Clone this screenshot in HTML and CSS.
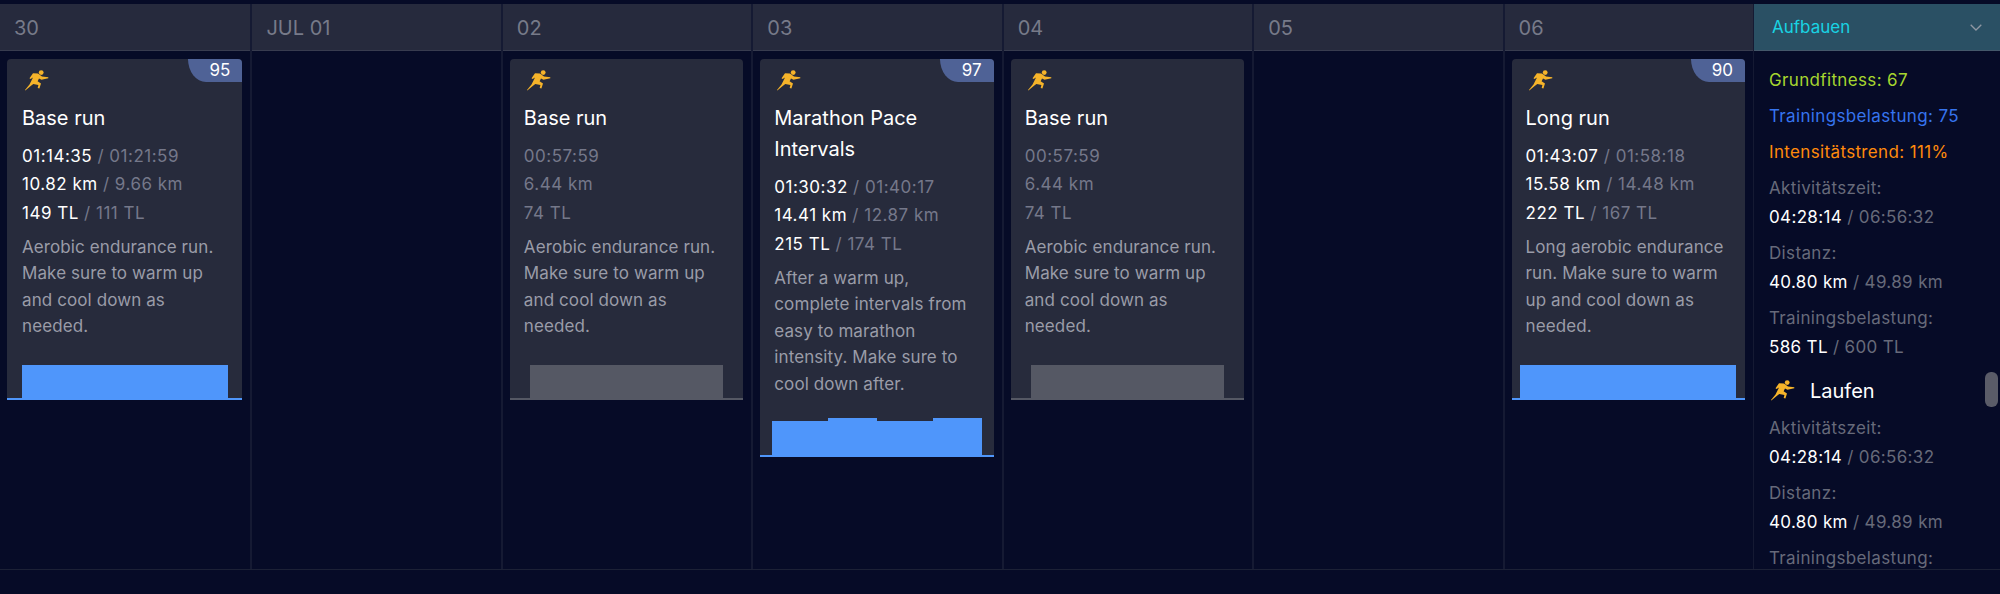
FILE: index.html
```html
<!DOCTYPE html>
<html lang="de">
<head>
<meta charset="utf-8">
<title>Kalender</title>
<link rel="stylesheet" href="styles.css">
</head>
<body>
<svg class="defs" width="0" height="0" aria-hidden="true"><defs>
<symbol id="runner" viewBox="0 0 24 21"><circle cx="16.2" cy="2.6" r="2.4"/><path d="M4.5 8.3 8 3.2 13 3.4 17 6.6 23.3 7.3 23.3 8.2 16.5 9.8 14 8.5 12.6 11.3 16 13.6 14.4 18.4 12.7 18 13.4 15 8.3 14 6 15.8 .3 20.5 0 20 4.5 14.5 8 7.5 5.5 9Z"/></symbol>
</defs></svg>
<main class="board">
  <div class="week">
    <section class="day">
      <header class="day-head">30</header>
      <div class="day-body">
        <article class="card card-done">
          <span class="badge">95</span>
          <svg class="run"><use href="#runner"/></svg>
          <h3 class="title">Base run</h3>
          <p class="stat"><b>01:14:35</b> / 01:21:59</p>
          <p class="stat"><b>10.82 km</b> / 9.66 km</p>
          <p class="stat"><b>149 TL</b> / 111 TL</p>
          <p class="desc">Aerobic endurance run. Make sure to warm up and cool down as needed.</p>
          <div class="chart"><i class="seg" style="width:206px;height:33px"></i></div>
        </article>
      </div>
    </section>
    <section class="day">
      <header class="day-head">JUL 01</header>
      <div class="day-body"></div>
    </section>
    <section class="day">
      <header class="day-head">02</header>
      <div class="day-body">
        <article class="card card-plan">
          <svg class="run"><use href="#runner"/></svg>
          <h3 class="title">Base run</h3>
          <p class="stat">00:57:59</p>
          <p class="stat">6.44 km</p>
          <p class="stat">74 TL</p>
          <p class="desc">Aerobic endurance run. Make sure to warm up and cool down as needed.</p>
          <div class="chart"><i class="seg" style="width:193px;height:33px"></i></div>
        </article>
      </div>
    </section>
    <section class="day">
      <header class="day-head">03</header>
      <div class="day-body">
        <article class="card card-done">
          <span class="badge">97</span>
          <svg class="run"><use href="#runner"/></svg>
          <h3 class="title">Marathon Pace Intervals</h3>
          <p class="stat"><b>01:30:32</b> / 01:40:17</p>
          <p class="stat"><b>14.41 km</b> / 12.87 km</p>
          <p class="stat"><b>215 TL</b> / 174 TL</p>
          <p class="desc">After a warm up, complete intervals from easy to marathon intensity. Make sure to cool down after.</p>
          <div class="chart"><i class="seg" style="width:56px;height:34px"></i><i class="seg" style="width:49px;height:37px"></i><i class="seg" style="width:56px;height:34px"></i><i class="seg" style="width:49px;height:37px"></i></div>
        </article>
      </div>
    </section>
    <section class="day">
      <header class="day-head">04</header>
      <div class="day-body">
        <article class="card card-plan">
          <svg class="run"><use href="#runner"/></svg>
          <h3 class="title">Base run</h3>
          <p class="stat">00:57:59</p>
          <p class="stat">6.44 km</p>
          <p class="stat">74 TL</p>
          <p class="desc">Aerobic endurance run. Make sure to warm up and cool down as needed.</p>
          <div class="chart"><i class="seg" style="width:193px;height:33px"></i></div>
        </article>
      </div>
    </section>
    <section class="day">
      <header class="day-head">05</header>
      <div class="day-body"></div>
    </section>
    <section class="day">
      <header class="day-head">06</header>
      <div class="day-body">
        <article class="card card-done">
          <span class="badge">90</span>
          <svg class="run"><use href="#runner"/></svg>
          <h3 class="title">Long run</h3>
          <p class="stat"><b>01:43:07</b> / 01:58:18</p>
          <p class="stat"><b>15.58 km</b> / 14.48 km</p>
          <p class="stat"><b>222 TL</b> / 167 TL</p>
          <p class="desc">Long aerobic endurance run. Make sure to warm up and cool down as needed.</p>
          <div class="chart"><i class="seg" style="width:216px;height:33px"></i></div>
        </article>
      </div>
    </section>
  </div>
  <aside class="side">
    <header class="phase"><span>Aufbauen</span><svg class="chev" viewBox="0 0 12 7"><path d="M.7.7 6 6 11.3.7"/></svg></header>
    <div class="side-body">
      <p class="metric lime">Grundfitness: 67</p>
      <p class="metric blue">Trainingsbelastung: 75</p>
      <p class="metric orange">Intensitätstrend: 111%</p>
      <p class="label">Aktivitätszeit:</p>
      <p class="value"><b>04:28:14</b> / 06:56:32</p>
      <p class="label">Distanz:</p>
      <p class="value"><b>40.80 km</b> / 49.89 km</p>
      <p class="label">Trainingsbelastung:</p>
      <p class="value"><b>586 TL</b> / 600 TL</p>
      <div class="sport"><svg class="run"><use href="#runner"/></svg><span>Laufen</span></div>
      <p class="label">Aktivitätszeit:</p>
      <p class="value"><b>04:28:14</b> / 06:56:32</p>
      <p class="label">Distanz:</p>
      <p class="value"><b>40.80 km</b> / 49.89 km</p>
      <p class="label">Trainingsbelastung:</p>
    </div>
    <div class="thumb"></div>
  </aside>
</main>
</body>
</html>
```
FILE: styles.css
```css
* { box-sizing: border-box; }
html, body { margin: 0; height: 594px; overflow: hidden; }
body {
  background: #060b27;
  color: #75788a;
  font-family: Inter, "Liberation Sans", sans-serif;
  font-size: 17px;
}
.defs { position: absolute; }
p, h3 { margin: 0; }
b { font-weight: 400; color: #fff; }

.board {
  display: flex;
  height: 566px;
  margin-top: 4px;
  border-bottom: 1px solid #1c2136;
}
.week {
  flex: 0 0 1753px;
  display: grid;
  grid-template-columns: repeat(7, 1fr);
}
.day {
  display: flex;
  flex-direction: column;
  min-width: 0;
  border-left: 2px solid #151a33;
}
.day:first-child { border-left: 0; }
.day-head {
  height: 47px;
  padding: 12px 0 0 14px;
  background: #262a3d;
  border-bottom: 1px solid #383c4f;
  font-size: 20px;
  line-height: 24px;
  color: #777a89;
}
.day-body { flex: 1; padding: 8px 8px 8px 7px; }

.card {
  position: relative;
  display: flex;
  flex-direction: column;
  background: #272b3c;
  border-radius: 4px 4px 0 0;
  padding: 11px 0 0 14px;
  border-bottom: 2px solid #4f96fb;
}
.day:first-child .card { padding-left: 15px; }
.card-plan { border-bottom-color: #555864; }
.badge {
  position: absolute;
  top: 0;
  right: 0;
  width: 54px;
  height: 23px;
  padding-right: 12px;
  background: #4f6296;
  border-radius: 0 4px 0 0;
  border-bottom-left-radius: 18px 23px;
  color: #fff;
  font-size: 17px;
  text-align: right;
  line-height: 22px;
}
.run { display: block; width: 24px; height: 21px; margin: 0 0 1px 3px; fill: #f6b42a; }
.title {
  margin: 11px 15px 8px 0;
  color: #fff;
  font-size: 20px;
  font-weight: 400;
  line-height: 31px;
}
.stat { line-height: 28.3px; white-space: nowrap; letter-spacing: .5px; }
.desc { margin: 7px 15px 0 0; color: #9a9ca8; line-height: 26.4px; letter-spacing: .1px; }
.chart {
  display: flex;
  align-items: flex-end;
  justify-content: center;
  height: 33px;
  margin: 25px 0 0 -14px;
}
.day:first-child .chart { margin-left: -15px; }
.seg { display: block; flex: none; background: #4f96fb; }
.card-plan .seg { background: #555864; }

.side { position: relative; flex: 1; min-width: 0; overflow: hidden; border-left: 1px solid #151a33; }
.phase {
  display: flex;
  align-items: center;
  justify-content: space-between;
  height: 47px;
  padding: 0 18px;
  background: #2a5064;
  border-bottom: 1px solid #44586a;
  color: #19d3e3;
}
.chev { width: 12px; height: 7px; fill: none; stroke: #8f97a3; stroke-width: 1.3; }
.side-body { padding: 11px 0 0 15px; letter-spacing: .35px; }
.metric { line-height: 36px; }
.lime { color: #a6d62f; }
.blue { color: #3674ee; }
.orange { color: #ff8a0c; }
.label { line-height: 28px; margin-top: 8px; color: #676a7a; }
.metric + .label { margin-top: 4px; }
.value { line-height: 28px; margin-top: 1px; color: #676a7a; letter-spacing: .35px; }
.sport { display: flex; align-items: center; gap: 15px; margin-top: 15px; color: #fff; font-size: 20px; line-height: 30px; letter-spacing: 0; }
.sport .run { margin-left: 2px; }
.thumb {
  position: absolute;
  top: 368px;
  right: 2px;
  width: 13px;
  height: 35px;
  border-radius: 6px;
  background: #5a5c68;
}
```
